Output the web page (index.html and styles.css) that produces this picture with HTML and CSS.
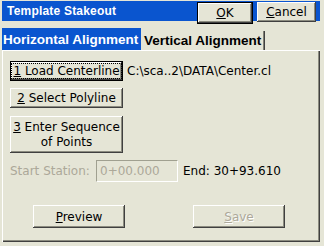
FILE: index.html
```html
<!DOCTYPE html>
<html>
<head>
<meta charset="utf-8">
<link rel="stylesheet" href="styles.css">
</head>
<body>
<div class="win">
  <div class="titlebar">
    <span class="title">Template Stakeout</span>
    <div class="tbtns">
      <button class="btn tbok default"><span><u>O</u>K</span></button>
      <button class="btn tbcancel"><span><u>C</u>ancel</span></button>
    </div>
  </div>
  <div class="tabs">
    <div class="tab active">Horizontal Alignment</div>
    <div class="tab">Vertical Alignment</div>
  </div>
  <div class="panel">
    <div class="row r1">
      <button class="btn big default"><span class="focus"><u>1</u> Load Centerline</span></button>
      <span class="path">C:\sca..2\DATA\Center.cl</span>
    </div>
    <div class="row r2">
      <button class="btn big"><span><u>2</u> Select Polyline</span></button>
    </div>
    <div class="row r3">
      <button class="btn big tall"><span><u>3</u> Enter Sequence<br>of Points</span></button>
    </div>
    <div class="row r4">
      <span class="lbl disabled">Start Station:</span>
      <div class="input">0+00.000</div>
      <span class="end">End: 30+93.610</span>
    </div>
    <div class="row r5">
      <button class="btn act"><span><u>P</u>review</span></button>
      <button class="btn act save"><span><u>S</u>ave</span></button>
    </div>
  </div>
</div>
</body>
</html>
```

FILE: styles.css
```css
html, body {
  margin: 0;
  padding: 0;
  background: #e5e5d6;
}
body {
  width: 324px;
  height: 246px;
  overflow: hidden;
  font-family: "DejaVu Sans", Verdana, sans-serif;
  font-size: 12px;
  color: #000;
}
.win {
  padding: 1px 4px 0 2px;
}
.titlebar {
  height: 20px;
  background: #0a55cf;
  display: flex;
  align-items: center;
  justify-content: space-between;
  padding-left: 5px;
}
.title {
  font-family: "Liberation Sans", Arial, sans-serif;
  color: #fff;
  font-weight: bold;
  font-size: 12px;
  letter-spacing: 0.2px;
}
.tbtns {
  display: flex;
  gap: 4px;
  align-self: flex-start;
  margin-top: 1px;
  padding-right: 4px;
}
.btn {
  font-family: "DejaVu Sans", Verdana, sans-serif;
  font-size: 12px;
  color: #000;
  background: #e5e5d6;
  border: 0;
  margin: 0;
  padding: 0;
  box-shadow: inset -1px -1px #404040, inset 1px 1px #ffffff, inset -2px -2px #8c8c80;
  display: flex;
  align-items: center;
  justify-content: center;
}
.btn.default {
  box-shadow: inset 0 0 0 1px #000, inset -2px -2px #404040, inset 2px 2px #ffffff, inset -3px -3px #8c8c80;
}
.tbok {
  width: 56px;
  height: 22px;
}
.tbcancel {
  width: 59px;
  height: 20px;
}
.tabs {
  display: flex;
  margin-top: 7px;
  height: 22px;
}
.tab {
  font-family: "Liberation Sans", Arial, sans-serif;
  font-weight: bold;
  font-size: 13.5px;
  display: flex;
  align-items: center;
  white-space: nowrap;
  flex-shrink: 0;
  box-sizing: border-box;
}
.tab.active {
  background: #0a55cf;
  color: #fff;
  width: 139px;
  padding-left: 1px;
}
.tab:not(.active) {
  margin-top: 3px;
  margin-left: 1px;
  padding-left: 2px;
  width: 122px;
  border-right: 1px solid #808074;
  box-shadow: 1px 0 #404040;
}
.panel {
  height: 192px;
  box-shadow: inset 1px 1px #ffffff, inset -1px -1px #404040, inset -2px -2px #8c8c80;
  padding: 0 8px;
  display: flex;
  flex-direction: column;
}
.row {
  display: flex;
  align-items: center;
}
.r1 { margin-top: 11px; }
.r2 { margin-top: 7px; }
.r3 { margin-top: 8px; }
.r4 { margin-top: 7px; }
.r5 { margin-top: 23px; padding-left: 23px; gap: 68px; }
.big {
  width: 113px;
  height: 20px;
}
.tall {
  height: 37px;
  line-height: 15px;
  text-align: center;
}
.focus {
  outline: 1px dotted #000;
  outline-offset: 0;
  padding: 0 1px;
}
.path {
  margin-left: 4px;
}
.lbl {
  width: 86px;
}
.disabled {
  color: #aca899;
}
.input {
  width: 82px;
  height: 22px;
  box-sizing: border-box;
  border: 1px solid;
  border-color: #a0a090 #ffffff #ffffff #a0a090;
  color: #aca899;
  padding-left: 3px;
  display: flex;
  align-items: center;
}
.end {
  margin-left: 5px;
}
.act {
  width: 92px;
  height: 23px;
}
.save {
  color: #aca899;
  text-shadow: 1px 1px #fff;
}
u {
  text-decoration: underline;
  text-underline-offset: 1px;
}
```
